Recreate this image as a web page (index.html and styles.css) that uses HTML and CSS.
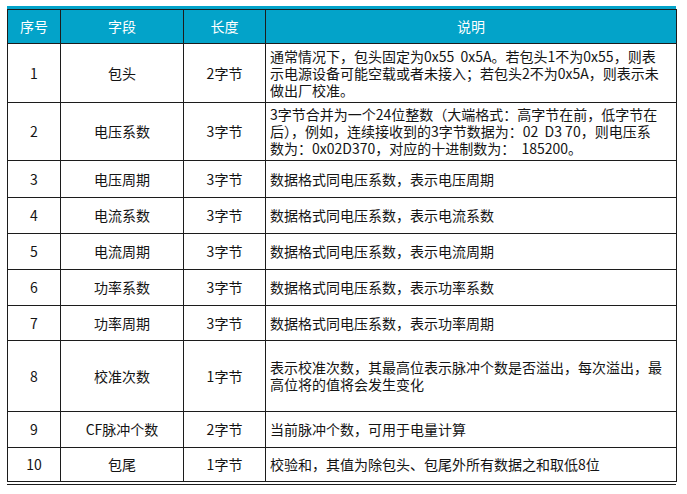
FILE: index.html
```html
<!DOCTYPE html>
<html lang="zh-CN">
<head>
<meta charset="utf-8">
<link rel="stylesheet" href="styles.css">
</head>
<body>
<div class="sheet">
  <div class="strip"></div>
  <table class="spec">
    <colgroup>
      <col class="c-no"><col class="c-field"><col class="c-len"><col class="c-desc">
    </colgroup>
    <thead>
      <tr class="h-head"><th>序号</th><th>字段</th><th>长度</th><th>说明</th></tr>
    </thead>
    <tbody>
      <tr class="h-59"><td>1</td><td>包头</td><td>2字节</td><td class="desc">通常情况下，包头固定为0x55&nbsp; 0x5A。若包头1不为0x55，则表<br>示电源设备可能空载或者未接入；若包头2不为0x5A，则表示未<br>做出厂校准。</td></tr>
      <tr class="h-58"><td>2</td><td>电压系数</td><td>3字节</td><td class="desc">3字节合并为一个24位整数（大端格式：高字节在前，低字节在<br>后），例如，连续接收到的3字节数据为：02&nbsp; D3 70，则电压系<br>数为：0x02D370，对应的十进制数为：&nbsp; 185200。</td></tr>
      <tr class="h-37"><td>3</td><td>电压周期</td><td>3字节</td><td class="desc">数据格式同电压系数，表示电压周期</td></tr>
      <tr class="h-36"><td>4</td><td>电流系数</td><td>3字节</td><td class="desc">数据格式同电压系数，表示电流系数</td></tr>
      <tr class="h-36"><td>5</td><td>电流周期</td><td>3字节</td><td class="desc">数据格式同电压系数，表示电流周期</td></tr>
      <tr class="h-36"><td>6</td><td>功率系数</td><td>3字节</td><td class="desc">数据格式同电压系数，表示功率系数</td></tr>
      <tr class="h-35"><td>7</td><td>功率周期</td><td>3字节</td><td class="desc">数据格式同电压系数，表示功率周期</td></tr>
      <tr class="h-71"><td>8</td><td>校准次数</td><td>1字节</td><td class="desc">表示校准次数，其最高位表示脉冲个数是否溢出，每次溢出，最<br>高位将的值将会发生变化</td></tr>
      <tr class="h-36"><td>9</td><td>CF脉冲个数</td><td>2字节</td><td class="desc">当前脉冲个数，可用于电量计算</td></tr>
      <tr class="h-34"><td>10</td><td>包尾</td><td>1字节</td><td class="desc">校验和，其值为除包头、包尾外所有数据之和取低8位</td></tr>
    </tbody>
  </table>
  <div class="double"></div>
</div>
</body>
</html>
```
FILE: styles.css
```css
html, body {
  margin: 0;
  padding: 0;
  background: #ffffff;
}
body {
  font-family: "Noto Sans CJK SC", "Noto Sans", sans-serif;
  font-size: 14px;
  color: #141414;
}
.sheet {
  padding: 6px 0 0 7px;
  width: 669px;
}
.strip {
  height: 3px;
  background: #03a3c9;
}
.spec {
  border-collapse: collapse;
  table-layout: fixed;
  width: 669px;
}
.c-no { width: 53px; }
.c-field { width: 123px; }
.c-len { width: 82px; }
.c-desc { width: 411px; }
.spec th, .spec td {
  border: 1px solid #1c1c1c;
  padding: 0;
  text-align: center;
  vertical-align: middle;
  line-height: 17px;
  font-weight: normal;
}
.spec th {
  background: #03a3c9;
  color: #ffffff;
}
.spec td.desc {
  text-align: left;
  padding-left: 4px;
  white-space: nowrap;
}
.h-head th { height: 33px; }
.h-59 td { height: 58px; }
.h-58 td { height: 57px; }
.h-37 td { height: 36px; }
.h-36 td { height: 35px; }
.h-35 td { height: 34px; }
.h-34 td { height: 33px; }
.h-71 td { height: 70px; }
.double {
  margin-top: 2px;
  border-top: 1px solid #1c1c1c;
  width: 669px;
}
```
